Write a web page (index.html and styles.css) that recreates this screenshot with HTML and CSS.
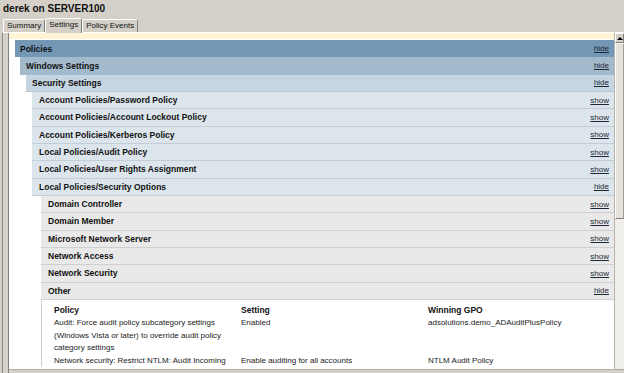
FILE: index.html
```html
<!DOCTYPE html>
<html lang="en">

<head>
    <meta charset="UTF-8">
    <meta name="viewport" content="width=device-width, initial-scale=1.0">
    <title>derek on SERVER100</title>
    <link rel="stylesheet" href="styles.css">
</head>

<body>
    <div class="title">derek on SERVER100</div>
    <div class="tabs">
        <div class="tab">Summary</div>
        <div class="tab active">Settings</div>
        <div class="tab">Policy Events</div>
    </div>
    <div class="panel">
        <div class="frame">
            <div class="view">
                <div class="content">
                    <div class="notice"></div>
                    <div class="tree">
                        <div class="bar lv1"><span>Policies</span><a href="#">hide</a></div>
                        <div class="group g2">
                            <div class="bar lv2"><span>Windows Settings</span><a href="#">hide</a></div>
                            <div class="group g3">
                                <div class="bar lv3"><span>Security Settings</span><a href="#">hide</a></div>
                                <div class="group g4">
                                    <div class="bar lv4"><span>Account Policies/Password Policy</span><a href="#">show</a></div>
                                    <div class="bar lv4"><span>Account Policies/Account Lockout Policy</span><a href="#">show</a></div>
                                    <div class="bar lv4"><span>Account Policies/Kerberos Policy</span><a href="#">show</a></div>
                                    <div class="bar lv4"><span>Local Policies/Audit Policy</span><a href="#">show</a></div>
                                    <div class="bar lv4"><span>Local Policies/User Rights Assignment</span><a href="#">show</a></div>
                                    <div class="bar lv4"><span>Local Policies/Security Options</span><a href="#">hide</a></div>
                                    <div class="group g5">
                                        <div class="bar lv5"><span>Domain Controller</span><a href="#">show</a></div>
                                        <div class="bar lv5"><span>Domain Member</span><a href="#">show</a></div>
                                        <div class="bar lv5"><span>Microsoft Network Server</span><a href="#">show</a></div>
                                        <div class="bar lv5"><span>Network Access</span><a href="#">show</a></div>
                                        <div class="bar lv5"><span>Network Security</span><a href="#">show</a></div>
                                        <div class="bar lv5"><span>Other</span><a href="#">hide</a></div>
                                        <div class="settings">
                                            <div class="th">Policy</div>
                                            <div class="th">Setting</div>
                                            <div class="th">Winning GPO</div>
                                            <div class="td">Audit: Force audit policy subcategory settings (Windows Vista or later) to override audit policy category settings</div>
                                            <div class="td">Enabled</div>
                                            <div class="td">adsolutions.demo_ADAuditPlusPolicy</div>
                                            <div class="td">Network security: Restrict NTLM: Audit Incoming</div>
                                            <div class="td">Enable auditing for all accounts</div>
                                            <div class="td">NTLM Audit Policy</div>
                                        </div>
                                    </div>
                                </div>
                            </div>
                        </div>
                    </div>
                </div>
                <div class="vscroll">
                    <div class="arrow"></div>
                    <div class="thumb"></div>
                </div>
            </div>
            <div class="hscroll"></div>
        </div>
    </div>
</body>

</html>
```

FILE: styles.css
```css
* {
    margin: 0px;
    padding: 0px;
    box-sizing: border-box;
}

body {
    font-family: "Liberation Sans", Arial, sans-serif;
    background: #d4d0c8;
    color: #111;
    width: 624px;
    height: 373px;
    overflow: hidden;
}

.title {
    height: 18px;
    line-height: 18px;
    padding-left: 3px;
    font-size: 10px;
    font-weight: bold;
}

.tabs {
    display: flex;
    align-items: flex-end;
    height: 14px;
    padding-left: 3px;
}

.tab {
    height: 13px;
    line-height: 12px;
    padding: 0 3px;
    font-size: 8px;
    border-top: 1px solid #fff;
    border-left: 1px solid #fff;
    border-right: 1px solid #808080;
    border-radius: 2px 2px 0 0;
}

.tab.active {
    height: 15px;
    margin-bottom: -1px;
    background: #d4d0c8;
    position: relative;
}

.panel {
    margin-left: 2px;
    border-left: 1px solid #8c8a84;
    border-top: 1px solid #fff;
    padding-left: 5px;
}

.frame {
    border-left: 1px solid #808080;
}

.view {
    display: flex;
    height: 336px;
}

.content {
    flex: 1;
    overflow: hidden;
    background: #fff;
}

.notice {
    height: 7px;
    background: #fff5d6;
    border-bottom: 1px solid #fff;
}

.tree {
    padding-left: 6px;
}

.group.g2 {
    padding-left: 5px;
}

.group.g3,
.group.g4 {
    padding-left: 6px;
}

.group.g5 {
    padding-left: 9px;
}

.bar {
    display: flex;
    justify-content: space-between;
    align-items: center;
    height: 17.33px;
    padding: 0 5px 0 7px;
    font-size: 8.5px;
    font-weight: bold;
}

.bar a {
    font-size: 8px;
    font-weight: normal;
    color: #1b2836;
}

.bar.lv1 {
    background: #7397b5;
    padding-left: 5px;
}

.bar.lv2 {
    background: #a3b9cc;
    padding-left: 6px;
}

.bar.lv3 {
    background: #c5d5e1;
    padding-left: 6px;
    border-bottom: 1px solid #b8c6d2;
}

.bar.lv4 {
    background: #dce5ec;
    border-bottom: 1px solid #c2cdd6;
}

.bar.lv5 {
    background: #e9e9e9;
    border-bottom: 1px solid #d0d0d0;
}

.settings {
    display: grid;
    grid-template-columns: 187px 187px 1fr;
    padding-left: 12px;
    border-left: 1px solid #d0d0d0;
    font-size: 8px;
    color: #222;
}

.settings .th {
    padding-top: 3px;
    line-height: 14px;
    font-size: 8.5px;
    font-weight: bold;
    color: #111;
}

.settings .td {
    padding-right: 7px;
    line-height: 12.6px;
}

.vscroll {
    width: 10px;
    background: #f1efea;
    border-left: 1px solid #b8b4ac;
}

.arrow {
    height: 10px;
    background: #d4d0c8;
    border-top: 1px solid #fff;
    border-left: 1px solid #fff;
    border-right: 1px solid #808080;
    border-bottom: 1px solid #808080;
    display: flex;
    justify-content: center;
    align-items: center;
}

.arrow::after {
    content: "";
    border-left: 3px solid transparent;
    border-right: 3px solid transparent;
    border-bottom: 3px solid #000;
}

.thumb {
    height: 175px;
    margin-top: 1px;
    background: #e4e1da;
    border-left: 1px solid #fff;
    border-right: 1px solid #a09c94;
    border-bottom: 1px solid #808080;
}

.hscroll {
    height: 4px;
    border-top: 1px solid #b0aca4;
    background: #d4d0c8;
}
```
